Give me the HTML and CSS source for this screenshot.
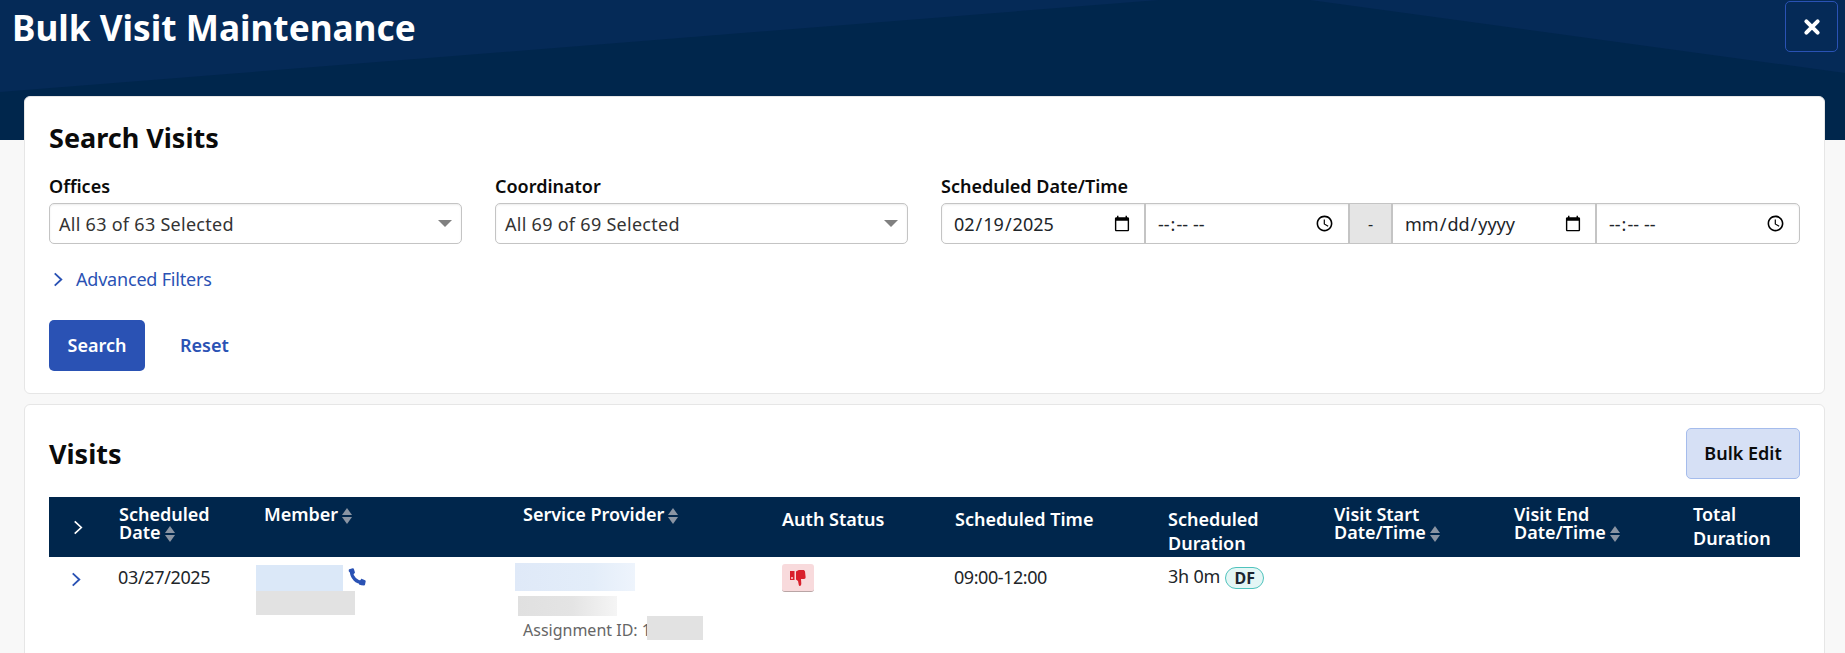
FILE: index.html
```html
<!DOCTYPE html>
<html lang="en">
<head>
<meta charset="utf-8">
<title>Bulk Visit Maintenance</title>
<link rel="stylesheet" href="styles.css">
</head>
<body>
<header class="banner">
  <svg class="banner-art" viewBox="0 0 1845 140" preserveAspectRatio="none" aria-hidden="true">
    <polygon points="0,0 1159,0 0,92" fill="#052a57"/>
    <polygon points="1310,0 1845,0 1845,73" fill="#052a57"/>
  </svg>
  <h1 class="page-title">Bulk Visit Maintenance</h1>
  <button class="close-btn" aria-label="Close">
    <svg viewBox="0 0 16 16" width="18" height="18"><path d="M3 3l10 10M13 3L3 13" stroke="#fff" stroke-width="3.6" stroke-linecap="round" fill="none"/></svg>
  </button>
</header>
<main class="content">
  <section class="card search-card">
    <h2 class="card-title">Search Visits</h2>
    <div class="filters">
      <div class="field field-select">
        <label class="field-label">Offices</label>
        <div class="select-box"><span>All 63 of 63 Selected</span><i class="caret"></i></div>
      </div>
      <div class="field field-select">
        <label class="field-label">Coordinator</label>
        <div class="select-box"><span>All 69 of 69 Selected</span><i class="caret"></i></div>
      </div>
      <div class="field field-dates">
        <label class="field-label">Scheduled Date/Time</label>
        <div class="date-group">
          <input class="dt" type="date" value="2025-02-19">
          <input class="dt" type="time">
          <span class="dash">-</span>
          <input class="dt" type="date">
          <input class="dt" type="time">
        </div>
      </div>
    </div>
    <a class="advanced">
      <svg class="chev" viewBox="0 0 10 16" width="10" height="15"><path d="M1.500 1.500L8.500 8 1.500 14.500" fill="none" stroke="#2a52b4" stroke-width="2"/></svg>
      <span>Advanced Filters</span>
    </a>
    <div class="actions">
      <button class="btn-primary">Search</button>
      <button class="btn-link">Reset</button>
    </div>
  </section>
  <section class="card visits-card">
    <div class="visits-head">
      <h2 class="card-title">Visits</h2>
      <button class="btn-soft">Bulk Edit</button>
    </div>
    <div class="grid-row thead">
      <div class="th th-chev"><svg viewBox="0 0 10 16" width="10" height="15"><path d="M1.500 1.500L8.500 8 1.500 14.500" fill="none" stroke="#fff" stroke-width="1.800"/></svg></div>
      <div class="th th-top">Scheduled<br>Date<i class="sort"></i></div>
      <div class="th th-top th-member">Member<i class="sort"></i></div>
      <div class="th th-top">Service Provider<i class="sort"></i></div>
      <div class="th th-mid">Auth Status</div>
      <div class="th th-mid">Scheduled Time</div>
      <div class="th th-mid">Scheduled<br>Duration</div>
      <div class="th th-top">Visit Start<br>Date/Time<i class="sort"></i></div>
      <div class="th th-top">Visit End<br>Date/Time<i class="sort"></i></div>
      <div class="th th-loose">Total<br>Duration</div>
    </div>
    <div class="grid-row tbody">
      <div class="td td-chev"><svg viewBox="0 0 10 16" width="10" height="15"><path d="M1.500 1.500L8.500 8 1.500 14.500" fill="none" stroke="#2a52b4" stroke-width="2"/></svg></div>
      <div class="td td-date">03/27/2025</div>
      <div class="td td-member">
        <div class="member-line"><span class="mask mask-blue member-name"></span>
          <svg class="phone" viewBox="0 0 18 18" width="18" height="18"><path d="M3.500 3.500C3.500 9.500 8.500 14.500 14.500 14.500" fill="none" stroke="#2a52b4" stroke-width="3.200"/><path d="M1.200 1.200L4.800.3c.5-.1.900.1 1.100.6l1 3.300c.1.400 0 .8-.3 1L4 7 .9 3.500c-.3-.8-.2-2 .3-2.300zM11 14l2-2.800c.3-.3.700-.4 1.100-.3l3 1.300c.5.200.7.600.6 1.100l-.7 3.500c-.1.500-.5.700-1 .7-1.800 0-3.500-.3-5-.9z" fill="#2a52b4"/></svg>
        </div>
        <span class="mask mask-gray member-sub"></span>
      </div>
      <div class="td td-provider">
        <span class="mask mask-blue-fade provider-name"></span>
        <span class="mask mask-gray-fade provider-sub"></span>
        <div class="assignment"><span>Assignment ID: 1</span><span class="mask mask-gray assignment-id"></span></div>
      </div>
      <div class="td td-auth">
        <span class="thumb"><svg viewBox="0 0 16 16" width="16" height="16"><path d="M0 1h4.500v9H0z" fill="#d9202c"/><path d="M1 7h2v2H1z" fill="#f4a6ab"/><path d="M6 1.500C7 .6 8.500 0 10 0h3c1.200 0 1.800.6 2 1.600l.6 5.400c.1 1.200-.5 2-1.600 2h-3l.3 4.500c0 1.500-.6 2.500-1.400 2.500-.6 0-1-.4-1.100-1L8 11 6 9.500z" fill="#d9202c"/></svg></span>
      </div>
      <div class="td td-time">09:00-12:00</div>
      <div class="td td-duration">3h 0m<span class="badge">DF</span></div>
      <div class="td"></div><div class="td"></div><div class="td"></div>
    </div>
  </section>
</main>
</body>
</html>
```
FILE: styles.css
```css
* { box-sizing: border-box; }
html, body { margin: 0; height: 100%; overflow: hidden; }
body { background: #f8f8f8; font-family: "Noto Sans", sans-serif; font-size: 18px; color: #212529; position: relative; }
.banner { background: #00264c; height: 140px; padding: 0 7px 0 12px; display: flex; justify-content: space-between; align-items: flex-start; position: relative; }
.banner-art { position: absolute; inset: 0; width: 100%; height: 100%; }
.page-title { position: relative; margin: 6px 0 0; font-size: 35.200px; line-height: 42px; font-weight: 700; color: #fff; }
.close-btn { position: relative; width: 53px; height: 51px; margin-top: 1px; background: transparent; border: 1px solid #2a52b4; border-radius: 5px; display: flex; align-items: center; justify-content: center; padding: 0; }
.content { margin-top: -44px; padding: 0 20px 0 24px; position: relative; display: flex; flex-direction: column; gap: 10px; }
.card { background: #fff; border: 1px solid #e6e6e6; border-radius: 6px; }
.search-card { height: 298px; padding: 23px 24px 0; }
.card-title { margin: 0; font-size: 27px; line-height: 36px; font-weight: 700; color: #0b0b0b; }
.filters { display: flex; margin-top: 18px; }
.field-label { display: block; font-size: 18px; line-height: 24px; font-weight: 600; color: #0b0b0b; margin-bottom: 5px; }
.field-select { width: 413px; margin-right: 33px; }
.field-dates { width: 859px; }
.select-box { height: 41px; border: 1px solid #c4c4c4; border-radius: 5px; padding: 0 9px; display: flex; align-items: center; justify-content: space-between; box-shadow: inset 0 1px 2px rgba(0,0,0,.08); color: #333; letter-spacing: .28px; }
.caret { border-left: 7px solid transparent; border-right: 7px solid transparent; border-top: 7px solid #808080; }
.date-group { height: 41px; display: flex; border: 1px solid #c4c4c4; border-radius: 5px; box-shadow: inset 0 1px 2px rgba(0,0,0,.08); overflow: hidden; }
.dt { flex: 1 1 0; min-width: 0; height: 100%; border: 0; background: transparent; font: 18px "Noto Sans", sans-serif; color: #212529; padding: 0 11px; outline: 0; border-right: 2px solid #c4c4c4; }
.dt:last-child { border-right: 0; }
.dash { width: 43px; flex: none; background: #e5e5e5; display: flex; align-items: center; justify-content: center; border-right: 2px solid #c4c4c4; font-size: 16px; }
.advanced { display: flex; align-items: center; gap: 13px; margin-top: 24px; padding-left: 4px; color: #2a52b4; line-height: 23px; letter-spacing: -.2px; }
.actions { display: flex; align-items: center; margin-top: 29px; }
.btn-primary { width: 96px; height: 51px; background: #2a52b4; color: #fff; border: 0; border-radius: 5px; padding: 0 0 2px; font: 600 18px "Noto Sans", sans-serif; }
.btn-link { background: none; border: 0; color: #2a52b4; font: 600 18px "Noto Sans", sans-serif; margin-left: 35px; padding: 0 0 2px; }
.visits-card { height: 300px; padding: 0 24px; }
.visits-head { display: flex; justify-content: space-between; align-items: center; padding: 23px 0 18px; height: 92px; }
.btn-soft { width: 114px; height: 51px; background: #d6e0f5; border: 1px solid #a5bcec; border-radius: 5px; font: 600 18px "Noto Sans", sans-serif; color: #0b0b0b; padding: 0 0 2px; }
.grid-row { display: grid; grid-template-columns: 70px 146px 258px 259px 173px 213px 166px 180px 179px 107px; }
.thead { background: #00264c; height: 60px; color: #fff; font-weight: 600; line-height: 18px; white-space: nowrap; }
.th { padding-top: 8px; }
.th-member { margin-left: -1px; }
.th-chev { display: flex; align-items: center; justify-content: flex-start; padding: 0 0 0 24px; }
.th-mid { padding-top: 10px; line-height: 24px; }
.th-loose { padding-top: 5px; line-height: 24px; }
.sort { display: inline-block; position: relative; width: 11px; height: 16px; margin-left: 4px; vertical-align: -3px; }
.sort::before, .sort::after { content: ""; position: absolute; left: 0; border-left: 5.500px solid transparent; border-right: 5.500px solid transparent; }
.sort::before { top: 0; border-bottom: 7px solid #8a94a3; }
.sort::after { bottom: 0; border-top: 7px solid #8a94a3; }
.tbody { color: #212529; line-height: 24px; }
.td-chev { padding: 15px 0 0 22px; }
.td-chev svg { display: block; }
.td-date { padding-top: 8px; margin-left: -1px; letter-spacing: -.35px; }
.td-member { margin-left: -9px; padding-top: 8px; }
.member-line { display: flex; align-items: flex-start; }
.member-name { width: 87px; height: 26px; }
.phone { margin: 3px 0 0 5px; }
.mask { display: block; }
.mask-blue { background: #dbe8f8; }
.mask-gray { background: #e2e2e2; }
.mask-blue-fade { background: linear-gradient(90deg, #dfe9f8, #e3edf9 65%, #eef4fc); }
.mask-gray-fade { background: linear-gradient(90deg, #e0e0e0, #e4e4e4 55%, #f5f5f5); }
.member-sub { width: 99px; height: 24px; }
.td-provider { margin-left: -8px; padding-top: 6px; }
.provider-name { width: 120px; height: 28px; }
.provider-sub { width: 99px; height: 20px; margin: 5px 0 0 3px; }
.assignment { position: relative; color: #666; margin-left: 8px; font-size: 16px; height: 24px; line-height: 28px; white-space: nowrap; }
.assignment-id { position: absolute; left: 124px; top: 0; width: 56px; height: 24px; }
.td-auth { padding-top: 7px; }
.thumb { width: 32px; height: 28px; display: flex; align-items: center; justify-content: center; background: #f8dadc; border-radius: 3px; border-bottom: 1px solid #b9a5a5; }
.td-time { padding-top: 8px; margin-left: -1px; letter-spacing: -.45px; }
.td-duration { padding-top: 7px; display: flex; align-items: flex-start; letter-spacing: -.2px; }
.badge { margin: 3px 0 0 5px; width: 39px; height: 22px; display: flex; align-items: center; justify-content: center; background: #e4f6f5; border: 1px solid #4fc3bd; border-radius: 11px; font-size: 16px; font-weight: 700; line-height: 1; color: #1c2530; letter-spacing: 0; }
```
